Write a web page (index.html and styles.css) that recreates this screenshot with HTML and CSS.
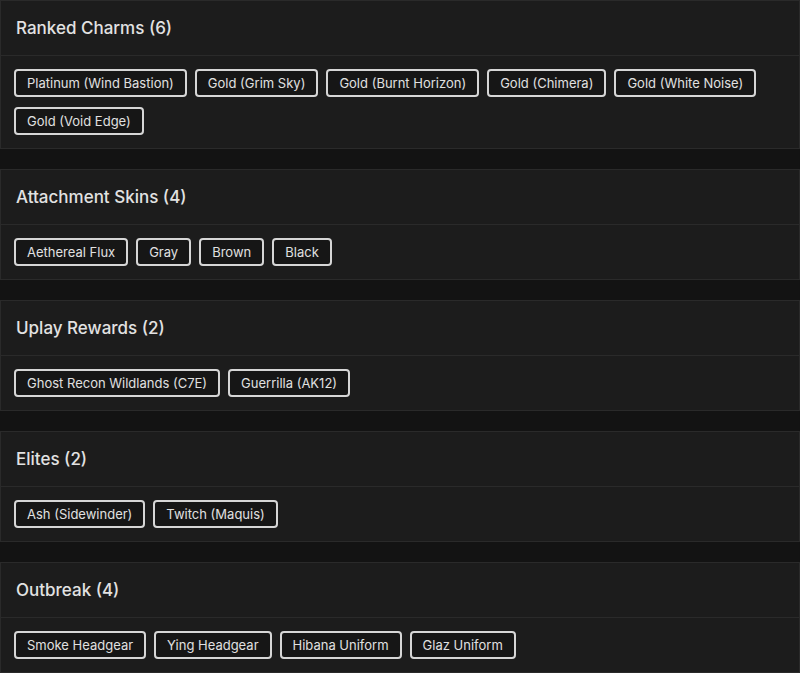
FILE: index.html
```html
<!DOCTYPE html>
<html>
<head>
<meta charset="utf-8">
<link rel="stylesheet" href="styles.css">
</head>
<body>
<div class="list">
  <section class="card">
    <div class="card-head">Ranked Charms (6)</div>
    <div class="card-body">
      <span class="chip">Platinum (Wind Bastion)</span>
      <span class="chip">Gold (Grim Sky)</span>
      <span class="chip">Gold (Burnt Horizon)</span>
      <span class="chip">Gold (Chimera)</span>
      <span class="chip">Gold (White Noise)</span>
      <span class="chip">Gold (Void Edge)</span>
    </div>
  </section>
  <section class="card">
    <div class="card-head">Attachment Skins (4)</div>
    <div class="card-body">
      <span class="chip">Aethereal Flux</span>
      <span class="chip">Gray</span>
      <span class="chip">Brown</span>
      <span class="chip">Black</span>
    </div>
  </section>
  <section class="card">
    <div class="card-head">Uplay Rewards (2)</div>
    <div class="card-body">
      <span class="chip">Ghost Recon Wildlands (C7E)</span>
      <span class="chip">Guerrilla (AK12)</span>
    </div>
  </section>
  <section class="card">
    <div class="card-head">Elites (2)</div>
    <div class="card-body">
      <span class="chip">Ash (Sidewinder)</span>
      <span class="chip">Twitch (Maquis)</span>
    </div>
  </section>
  <section class="card">
    <div class="card-head">Outbreak (4)</div>
    <div class="card-body">
      <span class="chip">Smoke Headgear</span>
      <span class="chip">Ying Headgear</span>
      <span class="chip">Hibana Uniform</span>
      <span class="chip">Glaz Uniform</span>
    </div>
  </section>
</div>
</body>
</html>
```
FILE: styles.css
```css
html, body {
  margin: 0;
  padding: 0;
  background: #131313;
}
body {
  font-family: Inter, "Open Sans", "Liberation Sans", sans-serif;
  color: #e2e2e2;
}
.list {
  display: flex;
  flex-direction: column;
  gap: 20px;
}
.card {
  background: #1c1c1c;
  border: 1px solid #2a2a2a;
}
.card-head {
  height: 55px;
  box-sizing: border-box;
  padding: 0 15px;
  display: flex;
  align-items: center;
  font-size: 17px;
  font-weight: 500;
  border-bottom: 1px solid #2a2a2a;
}
.card-body {
  display: flex;
  flex-wrap: wrap;
  column-gap: 8px;
  row-gap: 10px;
  padding: 13px;
}
.chip {
  height: 28px;
  box-sizing: border-box;
  display: inline-flex;
  align-items: center;
  padding: 0 11px;
  border: 2px solid #d6d6d6;
  border-radius: 4px;
  background: #161616;
  font-size: 13px;
  color: #e0e0e0;
}
```
